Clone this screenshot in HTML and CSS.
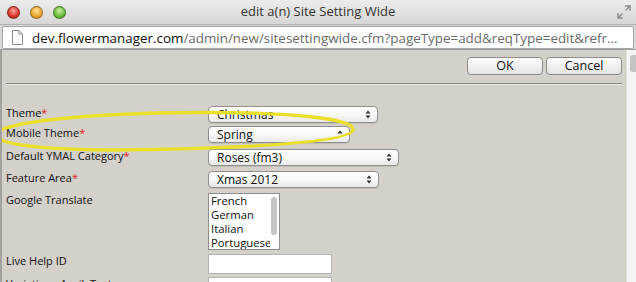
FILE: index.html
```html
<!DOCTYPE html>
<html>
<head>
<meta charset="utf-8">
<link rel="stylesheet" href="styles.css">
</head>
<body>
<div class="window">
  <div class="titlebar">
    <div class="lights">
      <span class="light red"></span>
      <span class="light yellow"></span>
      <span class="light green"></span>
    </div>
    <div class="title">edit a(n) Site Setting Wide</div>
    <svg class="resize" width="14" height="14" viewBox="0 0 14 14">
      <path d="M8 1h5v5M13 1L8.5 5.5M6 13H1V8M1 13l4.5-4.5" fill="none" stroke="#8a8a8a" stroke-width="1.4"/>
    </svg>
  </div>
  <div class="addressbar">
    <div class="urlfield">
      <svg class="docicon" width="11" height="15" viewBox="0 0 11 15">
        <path d="M0.5 0.5h6.5l3.5 3.5v10.5h-10z" fill="#fff" stroke="#8c8c8c"/>
        <path d="M7 0.5v3.5h3.5" fill="none" stroke="#8c8c8c"/>
      </svg>
      <span class="host">dev.flowermanager.com</span><span class="path">/admin/new/sitesettingwide.cfm?pageType=add&amp;reqType=edit&amp;refr…</span>
    </div>
  </div>
  <div class="content">
    <div class="page">
      <div class="toolbar">
        <button class="btn">OK</button>
        <button class="btn">Cancel</button>
      </div>
      <div class="sep"></div>
      <div class="form">
        <div class="row r1">
          <div class="label">Theme<span class="req">*</span></div>
          <div class="select w169"><span class="val">Christmas</span><svg class="arr" width="6" height="9" viewBox="0 0 6 9"><path d="M3 0.5L5.5 3.5H0.5z M3 8.5L5.5 5.5H0.5z" fill="#333"/></svg></div>
        </div>
        <div class="row r2">
          <div class="label">Mobile Theme<span class="req">*</span></div>
          <div class="select w141"><span class="val">Spring</span><svg class="arr" width="6" height="9" viewBox="0 0 6 9"><path d="M3 0.5L5.5 3.5H0.5z" fill="#333"/></svg></div>
        </div>
        <div class="row r3">
          <div class="label">Default YMAL Category<span class="req">*</span></div>
          <div class="select w190"><span class="val">Roses (fm3)</span><svg class="arr" width="6" height="9" viewBox="0 0 6 9"><path d="M3 0.5L5.5 3.5H0.5z M3 8.5L5.5 5.5H0.5z" fill="#333"/></svg></div>
        </div>
        <div class="row r4">
          <div class="label">Feature Area<span class="req">*</span></div>
          <div class="select w170"><span class="val">Xmas 2012</span><svg class="arr" width="6" height="9" viewBox="0 0 6 9"><path d="M3 0.5L5.5 3.5H0.5z M3 8.5L5.5 5.5H0.5z" fill="#333"/></svg></div>
        </div>
        <div class="row r5">
          <div class="label">Google Translate</div>
          <div class="listbox">
            <div class="opts">
              <div>French</div>
              <div>German</div>
              <div>Italian</div>
              <div>Portuguese</div>
            </div>
            <div class="lbscroll"><div class="lbthumb"></div></div>
          </div>
        </div>
        <div class="row r6">
          <div class="label">Live Help ID</div>
          <div class="input"></div>
        </div>
        <div class="row r7">
          <div class="label">Variations Avail. Text</div>
          <div class="input"></div>
        </div>
      </div>
    </div>
    <div class="vscroll"><div class="vthumb"></div></div>
    <svg class="circle" width="636" height="282" viewBox="0 0 636 282">
      <path d="M200 112.5 C 292 112, 357 119, 353 130 C 349 141, 272 147, 150 149.5 C 60 151.5, -4 146, -4 135 C -4 123, 80 113, 200 112.5 Z" fill="none" stroke="#e9df2c" stroke-width="3.4"/>
    </svg>
  </div>
</div>
</body>
</html>
```
FILE: styles.css
```css
* { box-sizing: border-box; }
html, body { margin: 0; padding: 0; }
body {
  width: 636px;
  height: 282px;
  overflow: hidden;
  font-family: "Open Sans", "DejaVu Sans", sans-serif;
  background: #d4d0ca;
}
.window { width: 636px; height: 282px; display: flex; flex-direction: column; position: relative; }
.titlebar {
  height: 24px;
  background: linear-gradient(#ececec, #d6d6d6);
  display: flex;
  align-items: center;
  position: relative;
  flex: none;
}
.lights { display: flex; gap: 10px; padding-left: 7px; }
.light {
  width: 13px; height: 13px; border-radius: 50%;
  display: block;
  border: 1px solid rgba(0,0,0,0.35);
}
.red { background: radial-gradient(circle at 50% 35%, #f9a7a0, #d8332a 60%, #a8201a); }
.yellow { background: radial-gradient(circle at 50% 35%, #fde2a0, #e8a42a 60%, #b9791a); }
.green { background: radial-gradient(circle at 50% 35%, #c9eea0, #6cbb3c 60%, #3f8a22); }
.title {
  position: absolute; left: 0; right: 0; top: 3px;
  text-align: center;
  font-size: 13px;
  line-height: 17px;
  color: #333;
}
.resize { position: absolute; right: 5px; top: 5px; }
.addressbar {
  height: 26px;
  background: #d9d9d9;
  padding: 1px 2px 1px 2px;
  border-bottom: 1px solid #9c9c9c;
  border-top: 1px solid #b0b0b0;
  flex: none;
}
.urlfield {
  height: 23px;
  background: #fff;
  border: 1px solid #a5a5a5;
  border-radius: 2px;
  display: flex;
  align-items: center;
  padding-left: 9px;
  white-space: nowrap;
  overflow: hidden;
  font-size: 13.4px;
  line-height: 18px;
}
.docicon { flex: none; margin-right: 9px; }
.host { color: #111; }
.path { color: #6c6c6c; }
.content {
  flex: 1;
  display: flex;
  position: relative;
  border-left: 2px solid #a4a29e;
  overflow: hidden;
}
.page { flex: 1; padding-left: 4px; padding-right: 4px; }
.toolbar {
  display: flex;
  justify-content: flex-end;
  gap: 3px;
  padding-top: 7px;
  height: 33px;
}
.btn {
  width: 76px; height: 18px;
  border: 1px solid #8a8a8a;
  border-radius: 4px;
  background: linear-gradient(#ffffff, #f0f0f0 50%, #e4e4e4);
  font-family: "Open Sans", sans-serif;
  font-size: 12.5px;
  color: #111;
  padding: 0;
  line-height: 16px;
}
.sep { height: 2px; border-top: 1px solid #8c8a86; border-bottom: 1px solid #ecebe8; }
.form { padding-top: 21px; }
.row { display: flex; align-items: flex-start; }
.r1 { height: 20px; }
.r2 { height: 23px; }
.r3 { height: 22px; }
.r4 { height: 22px; }
.r5 { height: 61px; }
.r6 { height: 23px; }
.label {
  width: 202px;
  font-size: 11px;
  color: #111;
  line-height: 13px;
  flex: none;
  white-space: nowrap;
}
.req { color: #e0201a; }
.select {
  height: 17px;
  border: 1px solid #8f8f8f;
  border-radius: 4px;
  background: linear-gradient(#ffffff, #f7f7f7 55%, #e9e9e9);
  display: flex;
  align-items: center;
  justify-content: space-between;
  padding-left: 8px;
  padding-right: 6px;
  font-size: 12px;
  line-height: 15px;
  color: #111;
  overflow: hidden;
  box-shadow: 0 1px 0 rgba(0,0,0,0.08);
}
.w169 { width: 170px; }
.w141 { width: 142px; }
.w190 { width: 191px; }
.w170 { width: 171px; }
.arr { flex: none; display: block; }
.listbox {
  width: 72px; height: 57px;
  background: #fff;
  border: 1px solid #8f8f8f;
  display: flex;
  overflow: hidden;
}
.opts { flex: 1; font-size: 11.3px; line-height: 14px; padding-left: 2px; padding-top: 0; color: #111; white-space: nowrap; overflow: hidden; }
.lbscroll { width: 9px; flex: none; padding: 3px 1px; }
.lbthumb { width: 6px; height: 38px; background: #c5c5c5; border-radius: 3px; }
.input {
  width: 124px; height: 20px;
  background: #fff;
  border: 1px solid #b5b3ae;
}
.vscroll {
  width: 10px;
  flex: none;
  background: #f4f4f4;
  border-left: 1px solid #e0e0e0;
  padding: 5px 0 0 3px;
}
.vthumb { width: 7px; height: 17px; background: #c4c4c4; border-radius: 3px 0 0 3px; }
.circle { position: absolute; left: -2px; top: -50px; pointer-events: none; }
```
